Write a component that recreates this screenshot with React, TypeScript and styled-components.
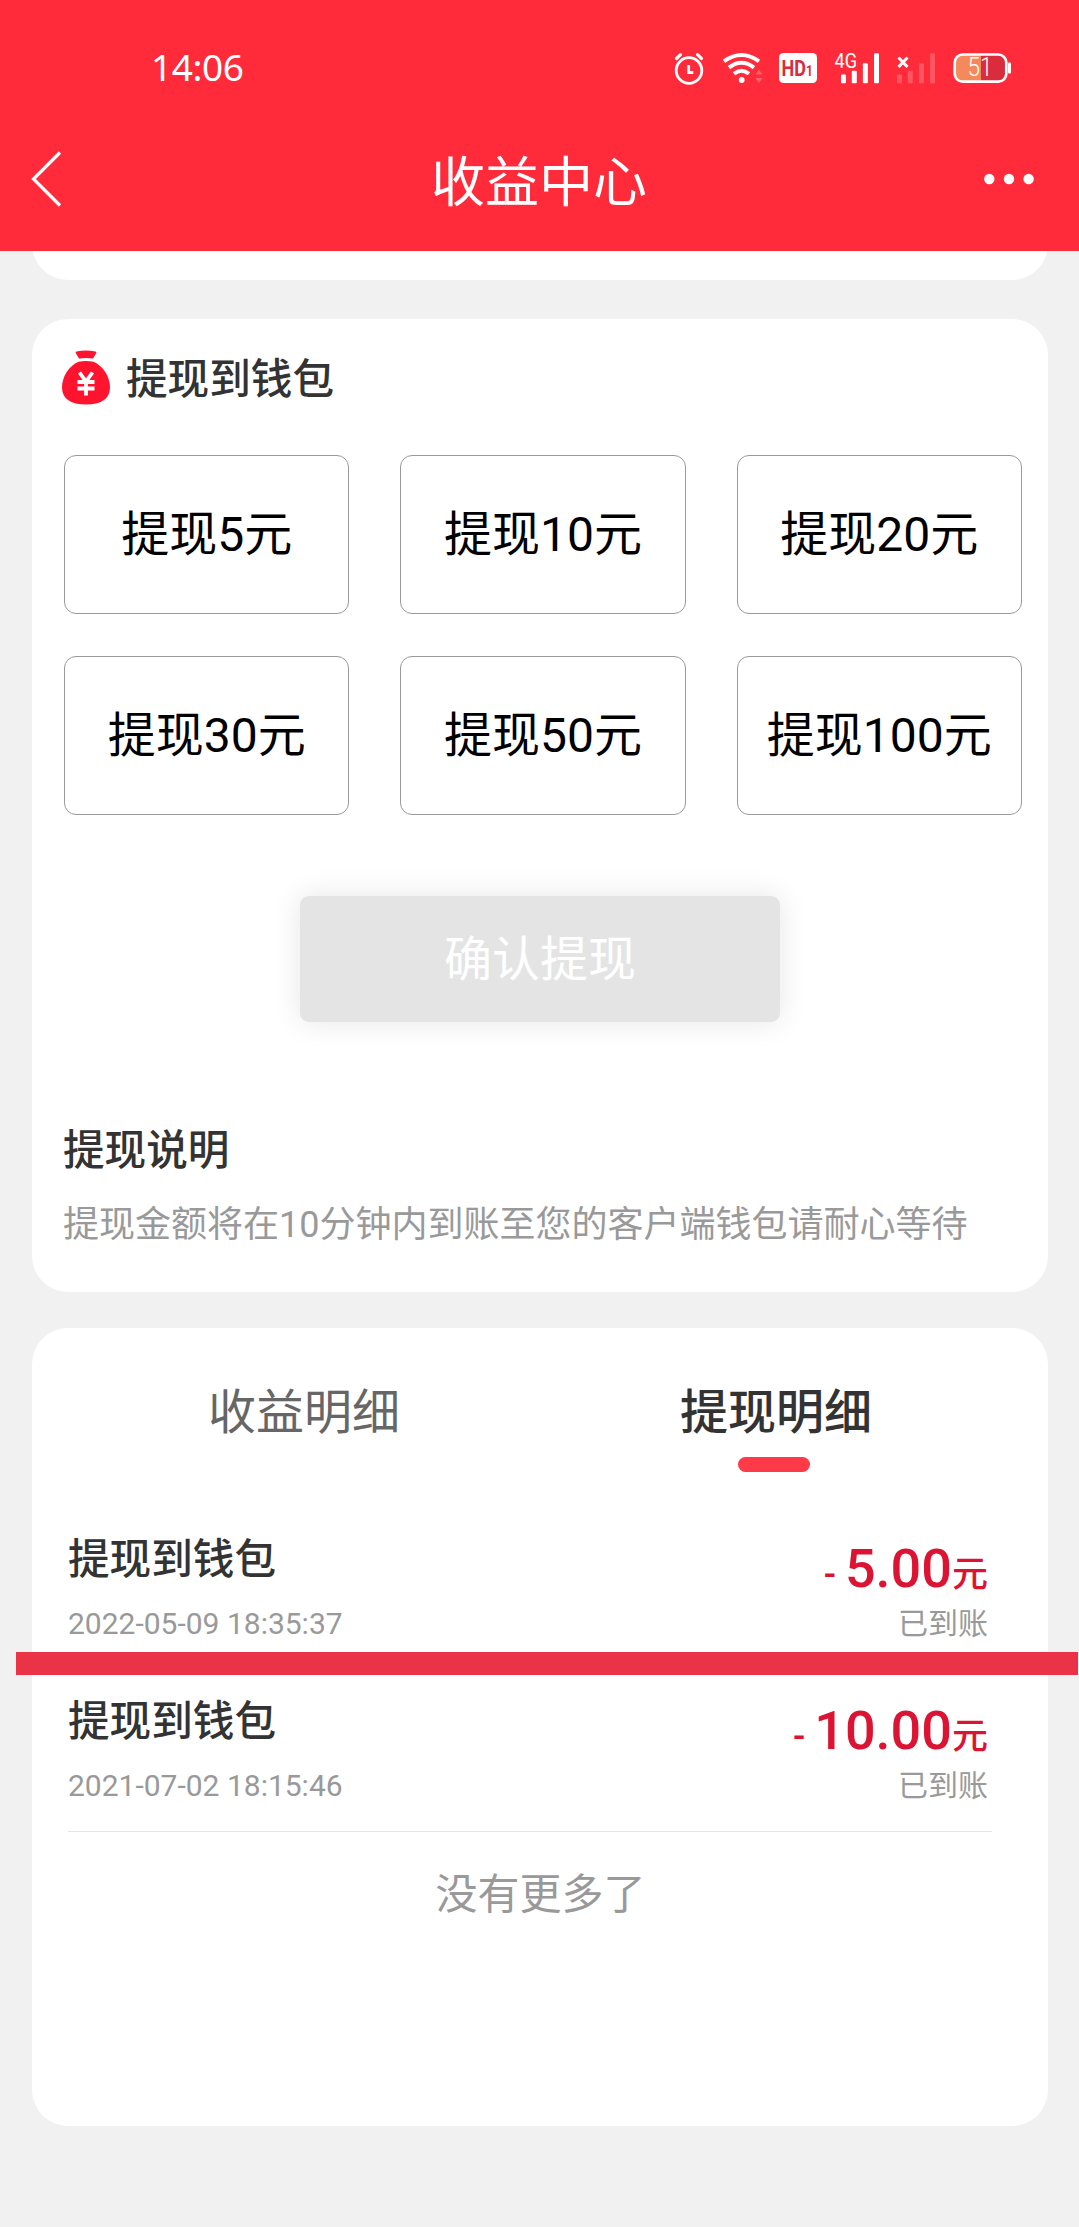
import React, { useState } from "react";
import styled, { createGlobalStyle } from "styled-components";

const Global = createGlobalStyle`
  * { box-sizing: border-box; }
  body {
    margin: 0;
    background: #f1f1f1;
    font-family: Roboto, "Noto Sans CJK SC", sans-serif;
    color: #333;
  }
  button { font-family: inherit; padding: 0; border: 0; background: none; cursor: pointer; }
`;

const Page = styled.div`
  width: 1079px;
  height: 2227px;
  overflow: hidden;
  display: flex;
  flex-direction: column;
  background: #f1f1f1;
`;

const Header = styled.header`
  height: 251px;
  flex: none;
  background: #ff2b3a;
  color: #fff;
`;

const StatusBar = styled.div`
  height: 104px;
  padding: 32px 68px 0 151px;
  display: flex;
  justify-content: space-between;
  align-items: center;
`;

const Clock = styled.span`
  margin-bottom: 2px;
  font-family: "Noto Sans", sans-serif;
  font-size: 37px;
  line-height: 70px;
  letter-spacing: -0.4px;
`;

const StatusIcons = styled.div`
  display: flex;
  align-items: center;
  gap: 16px;
  svg { display: block; }
`;

const NavBar = styled.div`
  height: 147px;
  padding: 2px 45px 0 30px;
  display: grid;
  grid-template-columns: 64px 1fr 50px;
  align-items: center;
  svg { display: block; }
`;

const NavTitle = styled.h1`
  margin: 10px 0 0;
  font-size: 54px;
  line-height: 80px;
  font-weight: 400;
  text-align: center;
`;

const Content = styled.main`
  padding: 0 31px 0 32px;
  display: flex;
  flex-direction: column;
`;

const Card = styled.section<{ $height: number; $gap?: number; $cut?: boolean }>`
  height: ${(p) => p.$height}px;
  margin-top: ${(p) => p.$gap ?? 0}px;
  border-radius: ${(p) => (p.$cut ? "0 0 36px 36px" : "36px")};
  background: #fff;
  flex: none;
`;

const CutCard = styled.div`
  height: 29px;
  overflow: hidden;
  display: flex;
  flex-direction: column;
  justify-content: flex-end;
`;

const CardHead = styled.div`
  height: 118px;
  padding-left: 30px;
  display: flex;
  align-items: center;
  gap: 16px;
`;

const Title = styled.h2`
  margin: 0;
  padding-top: 3px;
  font-size: 41.6px;
  line-height: 57px;
  font-weight: 500;
  color: #333;
`;

const AmountGrid = styled.div`
  margin: 18px 26px 0 32px;
  display: grid;
  grid-template-columns: repeat(3, 1fr);
  gap: 42px 51px;
`;

const AmountButton = styled.button`
  height: 159px;
  padding-top: 1px;
  border: 1px solid #999;
  border-radius: 12px;
  background: #fff;
  color: #000;
  font-size: 48px;
  line-height: 60px;
`;

const ConfirmButton = styled.button`
  display: block;
  width: 480px;
  height: 126px;
  margin: 81px auto 0 268px;
  padding-top: 2px;
  border-radius: 9px;
  background: #e4e4e4;
  box-shadow: 0 0 30px rgba(0, 0, 0, 0.1);
  color: #fff;
  font-size: 48px;
  line-height: 60px;
`;

const Notes = styled.div`
  padding: 97px 32px 0 31px;
`;

const NotesText = styled.p`
  margin: 19px 0 0;
  font-size: 36px;
  line-height: 54px;
  color: #999;
  white-space: nowrap;
`;

const Tabs = styled.div`
  height: 180px;
  padding: 55px 36px 0 36px;
  display: flex;
`;

const Tab = styled.button<{ $active: boolean }>`
  flex: 1;
  display: flex;
  flex-direction: column;
  align-items: center;
  gap: 14px;
  font-size: 48px;
  line-height: 60px;
  font-weight: ${(p) => (p.$active ? 500 : 400)};
  color: ${(p) => (p.$active ? "#333" : "#666")};
`;

const TabMark = styled.span`
  width: 72px;
  height: 15px;
  margin-right: 4px;
  border-radius: 8px;
  background: #ff3a48;
`;

const Records = styled.div`
  position: relative;
  margin: 0 56px 0 36px;
`;

const Strike = styled.div`
  position: absolute;
  left: -52px;
  top: 144px;
  width: 1062px;
  height: 23px;
  background: #ea3347;
`;

const Record = styled.div`
  height: 162px;
  padding: 20px 4px 0 0;
  border-bottom: 1px solid #e4e4e4;
  display: flex;
  justify-content: space-between;
`;

const Side = styled.div<{ $end?: boolean }>`
  display: flex;
  flex-direction: column;
  align-items: ${(p) => (p.$end ? "flex-end" : "flex-start")};
  gap: 18px;
`;

const Meta = styled.span`
  font-size: 30px;
  line-height: 36px;
  color: #999;
`;

const Money = styled.div`
  height: 60px;
  padding-top: 1px;
  display: flex;
  align-items: baseline;
  font-size: 36px;
  line-height: 80px;
  font-weight: 500;
  color: #dc1433;
`;

const Figure = styled.span`
  margin-left: 9px;
  font-size: 54px;
`;

const Empty = styled.div`
  padding: 33px 0 0 1px;
  text-align: center;
  font-size: 42px;
  line-height: 60px;
  color: #999;
`;

const AlarmIcon = () => (
  <svg width="32" height="34" viewBox="674 51 32 34" fill="none" stroke="#fff" strokeLinecap="round">
    <circle cx="689" cy="70.5" r="12.8" strokeWidth="2.8" />
    <path d="M676.500 58.500l4-3.800M701.500 58.500l-4-3.800" strokeWidth="3.200" />
    <path d="M688.700 65v7.500h4.600" strokeWidth="2.800" strokeLinecap="butt" />
  </svg>
);

const WifiIcon = () => (
  <svg width="41" height="34" viewBox="722 51 41 34" fill="none" stroke="#fff" strokeWidth="4">
    <path d="M724 61.300Q741.500 48.600 759 61.300" />
    <path d="M729 67.600Q741.500 58 754 67.600" />
    <path d="M734 73.800Q741.500 67.600 749 73.800" />
    <circle cx="741.700" cy="80" r="2.900" fill="#fff" stroke="none" />
    <path d="M755.500 74.500l3.500-5 3.500 5zM755.500 78l3.500 5 3.500-5z" fill="#fff" stroke="none" opacity="0.25" />
  </svg>
);

const HdIcon = () => (
  <svg width="39" height="40" viewBox="779 48 39 40">
    <rect x="779" y="53" width="38" height="30" rx="4.500" fill="#fff" />
    <text transform="translate(781.500 75.500) scale(0.82 1)" fontFamily="Roboto, sans-serif" fontWeight="700" fontSize="22" fill="#d92c3c">
      HD<tspan fontSize="14.500">1</tspan>
    </text>
  </svg>
);

const BARS = [
  [0, 74.5],
  [10.8, 70.7],
  [21.9, 63.3],
  [33, 53.2],
];

const Bars = ({ x, faint }: { x: number; faint?: boolean }) => (
  <g fill="#fff" opacity={faint ? 0.2 : 1}>
    {BARS.map(([dx, y]) => (
      <rect key={dx} x={x + dx} y={y} width="5" height={83.2 - y} rx="1" />
    ))}
  </g>
);

const Signal4GIcon = () => (
  <svg width="46" height="44" viewBox="834 46 46 44">
    <text x="834.500" y="67.500" fontFamily="Roboto, sans-serif" fontSize="20" textLength="22.500" lengthAdjust="spacingAndGlyphs" fill="#fff">4G</text>
    <Bars x={841} />
  </svg>
);

const NoSignalIcon = () => (
  <svg width="41" height="34" viewBox="896 51 41 34">
    <path d="M898.500 57.500l9 9.500M907.500 57.500l-9 9.500" stroke="#fff" strokeWidth="3" />
    <Bars x={897} faint />
  </svg>
);

const BatteryIcon = () => (
  <svg width="58" height="44" viewBox="953 46 58 44">
    <rect x="954.700" y="54.500" width="51.600" height="27.200" rx="8" fill="#d92c3c" />
    <path d="M981 54.500h-18a8 8 0 0 0-8 8v11.200a8 8 0 0 0 8 8h18z" fill="#f5895c" />
    <rect x="954.700" y="54.500" width="51.600" height="27.200" rx="8" fill="none" stroke="#fff" strokeWidth="2.700" />
    <rect x="1008" y="62.500" width="3" height="11" rx="1" fill="#fff" />
    <text x="967.500" y="75.500" fontFamily="Roboto, sans-serif" fontWeight="300" fontSize="25" textLength="25" lengthAdjust="spacingAndGlyphs" fill="#fff">51</text>
  </svg>
);

const BackIcon = () => (
  <svg width="32" height="56" viewBox="30 150 32 56" fill="none" stroke="#fff" strokeWidth="3.200">
    <path d="M60 151.500L33.500 178 60 204.500" />
  </svg>
);

const MoreIcon = () => (
  <svg width="50" height="12" viewBox="983 173 50 12" fill="#fff">
    <circle cx="988.300" cy="179" r="5.200" />
    <circle cx="1008" cy="179" r="5.200" />
    <circle cx="1027.600" cy="179" r="5.200" />
  </svg>
);

const MoneyBagIcon = () => (
  <svg width="48" height="56" viewBox="0 0 48 56">
    <path d="M14.500 1.400Q24 -0.200 33.500 1.400Q35 2 34 3.500L31 8.400Q24 7.800 17 8.400L14 3.500Q13 2 14.500 1.400z" fill="#ff1430" />
    <path d="M16.500 11.800Q24 10.300 31.500 11.800C41 16 48 26.500 48 37.500C48 49 39 54.500 24 54.500S0 49 0 37.500C0 26.500 7 16 16.500 11.800z" fill="#ff1430" />
    <path d="M17.500 22.500L24 31.500L30.500 22.500M24 31v14.500M15.500 32h17M15.500 38.500h17" fill="none" stroke="#fff" strokeWidth="3.800" />
  </svg>
);

const AMOUNTS = [5, 10, 20, 30, 50, 100];
const TABS = ["收益明细", "提现明细"];
const RECORDS = [
  { time: "2022-05-09 18:35:37", amount: "5.00" },
  { time: "2021-07-02 18:15:46", amount: "10.00" },
];

export default function App() {
  const [tab, setTab] = useState(1);
  return (
    <Page>
      <Global />
      <Header>
        <StatusBar>
          <Clock>14:06</Clock>
          <StatusIcons>
            <AlarmIcon />
            <WifiIcon />
            <HdIcon />
            <Signal4GIcon />
            <NoSignalIcon />
            <BatteryIcon />
          </StatusIcons>
        </StatusBar>
        <NavBar>
          <BackIcon />
          <NavTitle>收益中心</NavTitle>
          <MoreIcon />
        </NavBar>
      </Header>
      <Content>
        <CutCard>
          <Card $height={80} $cut />
        </CutCard>
        <Card $height={973} $gap={39}>
          <CardHead>
            <MoneyBagIcon />
            <Title>提现到钱包</Title>
          </CardHead>
          <AmountGrid>
            {AMOUNTS.map((n) => (
              <AmountButton key={n}>{`提现${n}元`}</AmountButton>
            ))}
          </AmountGrid>
          <ConfirmButton>确认提现</ConfirmButton>
          <Notes>
            <Title>提现说明</Title>
            <NotesText>提现金额将在10分钟内到账至您的客户端钱包请耐心等待</NotesText>
          </Notes>
        </Card>
        <Card $height={798} $gap={36}>
          <Tabs>
            {TABS.map((label, i) => (
              <Tab key={label} $active={i === tab} onClick={() => setTab(i)}>
                {label}
                {i === tab && <TabMark />}
              </Tab>
            ))}
          </Tabs>
          <Records>
            {RECORDS.map((r) => (
              <Record key={r.time}>
                <Side>
                  <Title>提现到钱包</Title>
                  <Meta>{r.time}</Meta>
                </Side>
                <Side $end>
                  <Money>
                    -<Figure>{r.amount}</Figure>元
                  </Money>
                  <Meta>已到账</Meta>
                </Side>
              </Record>
            ))}
            <Strike />
          </Records>
          <Empty>没有更多了</Empty>
        </Card>
      </Content>
    </Page>
  );
}
